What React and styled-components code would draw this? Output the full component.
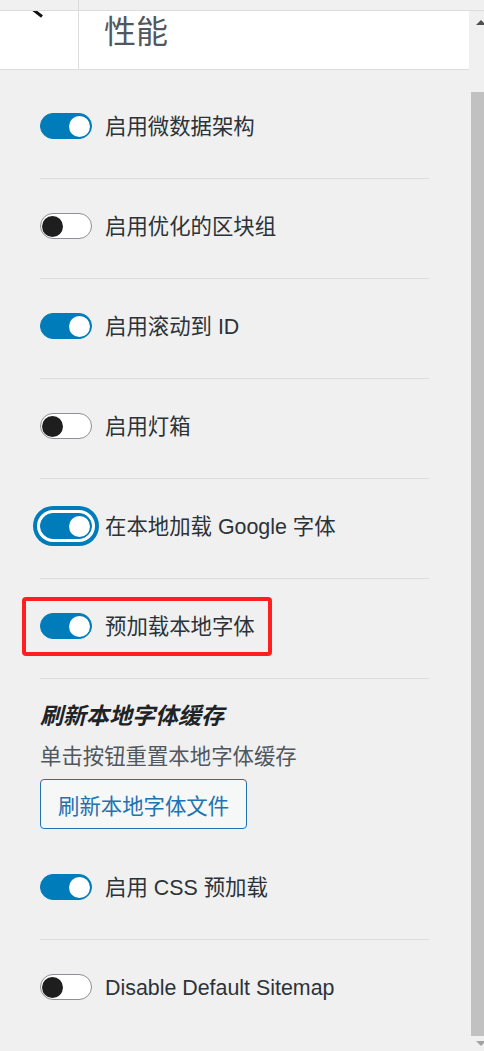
import React from 'react';
import styled, { createGlobalStyle } from 'styled-components';

const GlobalStyle = createGlobalStyle`
  html, body {
    margin: 0;
    padding: 0;
    background: #f0f0f0;
    overflow: hidden;
  }
  body {
    font-family: "Liberation Sans", "Noto Sans CJK SC", sans-serif;
  }
`;

const Page = styled.div`
  height: 1051px;
  display: flex;
  flex-direction: column;
  overflow: hidden;
  background: #f0f0f0;
`;

const TopStrip = styled.div`
  height: 10px;
  flex: none;
  border-bottom: 1px solid #dcdcde;
  display: flex;
`;

const TopCell = styled.div`
  width: 78px;
  border-right: 1px solid #dcdcde;
`;

const Body = styled.div`
  flex: 1;
  display: flex;
  min-height: 0;
`;

const Main = styled.div`
  width: 469px;
  flex: none;
  display: flex;
  flex-direction: column;
`;

const Header = styled.header`
  height: 58px;
  background: #fff;
  border-bottom: 1px solid #dcdcde;
  display: flex;
  align-items: flex-start;
`;

const BackCell = styled.div`
  width: 78px;
  height: 58px;
  flex: none;
  border-right: 1px solid #dcdcde;
  overflow: hidden;
`;

const Title = styled.h1`
  margin: 0 0 0 25px;
  font-weight: 400;
  font-size: 32px;
  line-height: 36px;
  color: #50575e;
  font-family: "Noto Sans CJK SC", sans-serif;
`;

const Content = styled.div`
  padding: 9px 40px 0 40px;
`;

const Row = styled.div`
  padding: 34px 0 39px;
  border-bottom: ${p => (p.$last ? 'none' : '1px solid #dcdcde')};
`;

const ToggleLine = styled.div`
  display: flex;
  align-items: center;
  gap: 13px;
  height: 26px;
  position: relative;
`;

const Track = styled.span`
  width: 52px;
  height: 26px;
  box-sizing: border-box;
  flex: none;
  border-radius: 13px;
  position: relative;
  background: ${p => (p.$on ? '#007cba' : '#fff')};
  border: 1px solid ${p => (p.$on ? '#007cba' : '#8c8f94')};
  box-shadow: ${p => (p.$focus ? '0 0 0 3px #fff, 0 0 0 7px #007cba' : 'none')};

  &::after {
    content: '';
    position: absolute;
    top: 1.5px;
    left: ${p => (p.$on ? '28px' : '1px')};
    width: 21px;
    height: 21px;
    border-radius: 50%;
    background: ${p => (p.$on ? '#fff' : '#1e1e1e')};
  }
`;

const Label = styled.span`
  font-size: 21.4px;
  line-height: 26px;
  color: #2c3338;
  position: relative;
  top: 1px;
`;

const Highlight = styled.div`
  position: absolute;
  top: -16px;
  left: -18px;
  width: 250px;
  height: 59px;
  box-sizing: border-box;
  border: 4px solid #ff1f1f;
  border-radius: 4px;
  pointer-events: none;
`;

const Section = styled.div`
  padding: 23px 0 11px;
`;

const SectionTitle = styled.h3`
  margin: 0;
  font-size: 23px;
  line-height: 28px;
  font-weight: 700;
  font-style: italic;
  color: #1d2327;
`;

const SectionText = styled.p`
  margin: 13px 0 8px;
  font-size: 21.4px;
  line-height: 28px;
  color: #50575e;
`;

const Button = styled.button`
  height: 50px;
  padding: 0 17px;
  border: 1px solid #2271b1;
  border-radius: 4px;
  background: #f6f7f7;
  color: #2271b1;
  font-family: inherit;
  font-size: 21.4px;
  cursor: pointer;
`;

const Scrollbar = styled.div`
  width: 15px;
  flex: none;
  display: flex;
  flex-direction: column;
  overflow: hidden;
`;

const Arrow = styled.div`
  height: ${p => (p.$up ? '81px' : '15px')};
  flex: none;
  display: flex;
  align-items: ${p => (p.$up ? 'flex-start' : 'center')};
  padding: ${p => (p.$up ? '9px 0 0 7px' : '0 0 0 7px')};
  box-sizing: border-box;

  &::before {
    content: '';
    width: 0;
    height: 0;
    border-left: 5px solid transparent;
    border-right: 5px solid transparent;
    ${p => (p.$up
      ? 'border-bottom: 5px solid #505050;'
      : 'border-top: 5px solid #a3a3a3;')}
  }
`;

const Thumb = styled.div`
  flex: 1;
  margin-left: 2px;
  background: #c1c1c1;
`;

const settings = [
  { label: '启用微数据架构', on: true },
  { label: '启用优化的区块组', on: false },
  { label: '启用滚动到 ID', on: true },
  { label: '启用灯箱', on: false },
  { label: '在本地加载 Google 字体', on: true, focus: true },
  { label: '预加载本地字体', on: true, marked: true },
];

const Toggle = ({ label, on, focus, marked }) => (
  <ToggleLine>
    {marked && <Highlight />}
    <Track $on={on} $focus={focus} />
    <Label>{label}</Label>
  </ToggleLine>
);

export default function App() {
  return (
    <Page>
      <GlobalStyle />
      <TopStrip>
        <TopCell />
      </TopStrip>
      <Body>
        <Main>
          <Header>
            <BackCell>
              <svg width="78" height="58" viewBox="0 0 78 58">
                <path d="M31 -3 L42 5.5" stroke="#111" strokeWidth="3" fill="none" />
              </svg>
            </BackCell>
            <Title>性能</Title>
          </Header>
          <Content>
            {settings.map(s => (
              <Row key={s.label}>
                <Toggle {...s} />
              </Row>
            ))}
            <Section>
              <SectionTitle>刷新本地字体缓存</SectionTitle>
              <SectionText>单击按钮重置本地字体缓存</SectionText>
              <Button>刷新本地字体文件</Button>
            </Section>
            <Row>
              <Toggle label="启用 CSS 预加载" on />
            </Row>
            <Row $last>
              <Toggle label="Disable Default Sitemap" on={false} />
            </Row>
          </Content>
        </Main>
        <Scrollbar>
          <Arrow $up />
          <Thumb />
          <Arrow />
        </Scrollbar>
      </Body>
    </Page>
  );
}
